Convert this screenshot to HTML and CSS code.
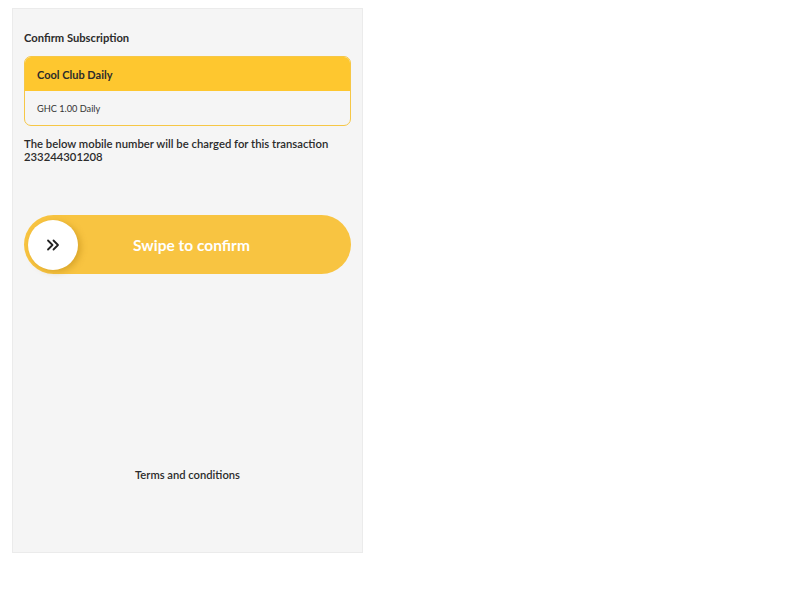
FILE: index.html
```html
<!DOCTYPE html>
<html lang="en">
<head>
    <meta charset="UTF-8">
    <meta name="viewport" content="width=device-width, initial-scale=1.0">
    <title>Confirm Subscription</title>
    <link rel="stylesheet" href="styles.css">
</head>
<body>

    <div class="panel">
        <!-- Header -->
        <div class="page-title">Confirm Subscription</div>

        <!-- Plan Card -->
        <div class="plan-card">
            <div class="plan-name">Cool Club Daily</div>
            <div class="plan-price">GHC 1.00 Daily</div>
        </div>

        <div class="charge-info">
            The below mobile number will be charged for this transaction<br>
            233244301208
        </div>

        <!-- Swipe Button -->
        <div class="swipe">
            <div class="swipe-knob">
                <svg width="14" height="12" viewBox="0 0 14 12" fill="none" stroke="#222" stroke-width="1.8" stroke-linecap="round" stroke-linejoin="round">
                    <path d="M2 1.5 L6.5 6 L2 10.5"/>
                    <path d="M7.5 1.5 L12 6 L7.5 10.5"/>
                </svg>
            </div>
            <div class="swipe-text">Swipe to confirm</div>
        </div>

        <div class="spacer"></div>

        <div class="terms">Terms and conditions</div>
    </div>

</body>
</html>
```

FILE: styles.css
```css
body {
    font-family: 'Lato', 'Noto Sans', sans-serif;
    background-color: #ffffff;
    margin: 8px 0 0 12px;
}
.panel {
    width: 327px;
    height: 499px;
    background-color: #f5f5f5;
    border: 1px solid #ebebeb;
    padding: 22px 11px 22px 11px;
    display: flex;
    flex-direction: column;
    color: #2b2b2b;
}
.page-title {
    font-size: 11.2px;
    font-weight: bold;
    line-height: 14px;
    margin-bottom: 11px;
}
.plan-card {
    border: 1.5px solid #f6c746;
    border-radius: 7px;
    overflow: hidden;
    background-color: #f5f5f5;
}
.plan-name {
    background-color: #fec72f;
    height: 34px;
    display: flex;
    align-items: center;
    padding-left: 12px;
    font-size: 11px;
    font-weight: bold;
}
.plan-price {
    height: 34px;
    display: flex;
    align-items: center;
    padding-left: 12px;
    font-size: 9.2px;
    color: #333;
}
.charge-info {
    margin-top: 11px;
    font-size: 11.3px;
    line-height: 13px;
    font-weight: 600;
}
.swipe {
    margin-top: 52px;
    height: 59px;
    border-radius: 30px;
    background-color: #f8c441;
    display: flex;
    align-items: center;
    padding-left: 4px;
}
.swipe-knob {
    width: 50px;
    height: 50px;
    border-radius: 50%;
    background-color: #ffffff;
    box-shadow: 3px 2px 6px rgba(160, 110, 0, 0.35);
    display: flex;
    align-items: center;
    justify-content: center;
}
.swipe-text {
    flex: 1;
    text-align: center;
    color: #ffffff;
    font-size: 15.5px;
    font-weight: bold;
    padding-right: 46px;
}
.spacer {
    flex: 1;
}
.terms {
    text-align: center;
    font-size: 11.2px;
    font-weight: 600;
    margin-bottom: 49px;
}
```
